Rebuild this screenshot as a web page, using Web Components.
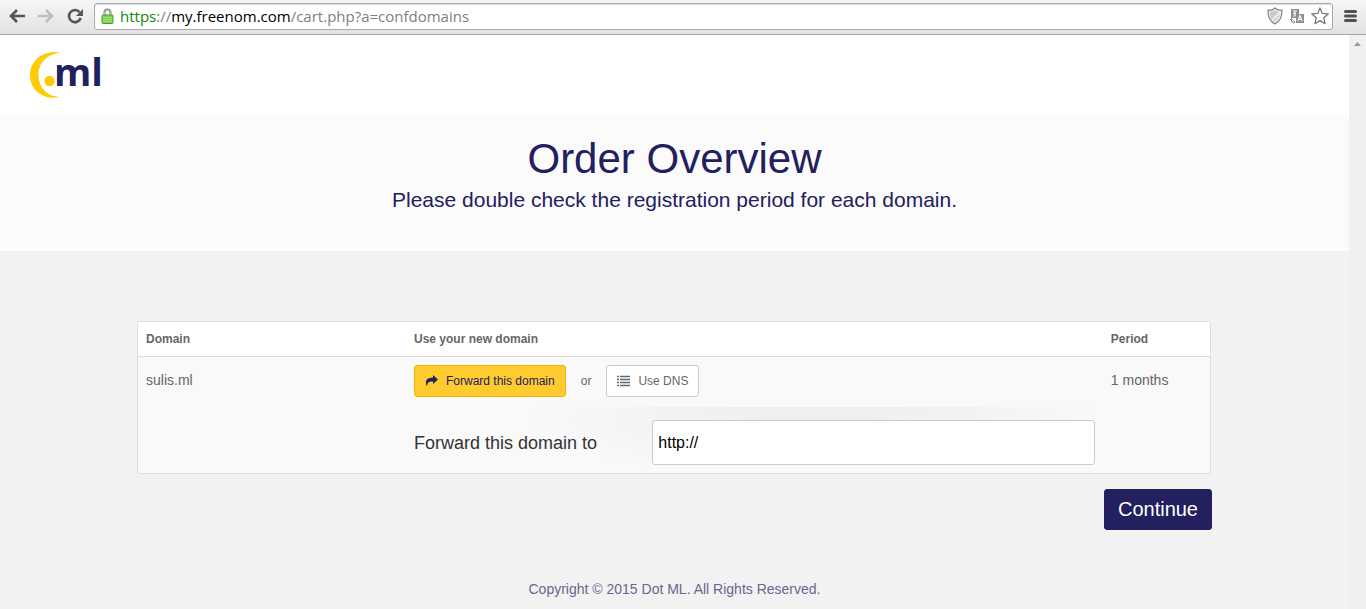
<!DOCTYPE html>
<html lang="en">
<head>
<meta charset="utf-8">
<meta name="viewport" content="width=device-width, initial-scale=1">
<title>Order Overview</title>
<style>
  html, body { margin: 0; }
  body { font-family: "Liberation Sans", Arial, sans-serif; background: #f2f2f2; --navy: #22205f; --line: #ddd; }
</style>
</head>
<body>
<order-app></order-app>

<script>
const define = (name, html, setup) => {
  const template = document.createElement('template');
  template.innerHTML = html;
  customElements.define(name, class extends HTMLElement {
    constructor() {
      super();
      this.attachShadow({ mode: 'open' }).append(template.content.cloneNode(true));
      if (setup) setup(this.shadowRoot);
    }
  });
};

define('browser-toolbar', `
  <style>
    :host { display: flex; align-items: center; gap: 11px; box-sizing: border-box; height: 35px; padding: 0 9px 2px; background: linear-gradient(#f6f6f6, #e2e2e2); border-bottom: 1px solid #a6a6a6; }
    nav { display: flex; gap: 13px; }
    button { display: block; padding: 0; border: 0; background: none; }
    svg { display: block; }
    .omnibox { flex: 1; display: flex; align-items: center; box-sizing: border-box; height: 27px; padding: 0 3px 0 6px; gap: 6px; background: #fff; border: 1px solid #ababab; border-radius: 3px; box-shadow: inset 0 1px 1px #ddd; min-width: 0; }
    .url { flex: 1; min-width: 0; overflow: hidden; white-space: nowrap; font: 15px/22px "Open Sans", "Noto Sans", sans-serif; color: #808080; outline: 0; }
    .secure { color: #0b8a0b; }
    .host { color: #000; }
    .actions { display: flex; align-items: center; gap: 6px; }
  </style>
  <nav aria-label="Browser">
    <button aria-label="Back"><svg width="16" height="16" viewBox="0 0 16 16" fill="none" stroke="#555" stroke-width="2.6"><path d="M2 8H16M8 2L2 8l6 6"/></svg></button>
    <button aria-label="Forward"><svg width="16" height="16" viewBox="0 0 16 16" fill="none" stroke="#bfbfbf" stroke-width="2.6"><path d="M14 8H0M8 2l6 6-6 6"/></svg></button>
    <button aria-label="Reload"><svg width="16" height="16" viewBox="0 0 16 16"><path d="M12.6 4.2A6 6 0 1 0 13.7 10" fill="none" stroke="#555" stroke-width="2.6"/><path d="M16 1v7H9z" fill="#555"/></svg></button>
  </nav>
  <div class="omnibox">
    <svg width="13" height="16" viewBox="0 0 13 16"><path d="M3.500 8V4.500a3 3 0 0 1 6 0V8" fill="none" stroke="#7b7b7b" stroke-width="2"/><path d="M3.500 8V4.500a3 3 0 0 1 6 0V8" fill="none" stroke="#ddd" stroke-width=".7"/><rect x="1" y="7" width="11" height="8.500" rx="1" fill="#83cf59" stroke="#4c9c31"/><path d="M2 9.500h9M2 11.500h9M2 13.500h9" stroke="#a5e080" stroke-width=".8"/></svg>
    <div class="url" role="textbox" aria-label="Address" contenteditable="true" spellcheck="false"><span class="secure">https</span>://<span class="host">my.freenom.com</span>/cart.php?a=confdomains</div>
    <div class="actions">
      <button aria-label="Shield"><svg width="16" height="18" viewBox="0 0 16 18"><path d="M8 1C6 3 3.500 3.500 1 3.200C.8 10 2.500 14 8 17c5.500-3 7.200-7 7-13.800C12.500 3.500 10 3 8 1z" fill="#eee" stroke="#858585" stroke-width="1.200"/><path d="M8 3C6.500 4.200 5 4.900 3 5c0 3.500.5 5.500 1.600 7.200L12 4.800C10.300 4.600 9.200 4 8 3z" fill="#c9c9c9"/><path d="M5.500 13.200L13 6c-.1 4-1.500 7-5 9.200z" fill="#d9d9d9"/></svg></button>
      <button aria-label="Translate"><svg width="16" height="16" viewBox="0 0 16 16"><path d="M2 1h8v5h5v9H7v-5H2z" fill="#8e8e8e"/><path d="M4 3h4M4 5.500h3M6 3v5M4 8h2.500" stroke="#fff" stroke-width="1" fill="none"/><path d="M8.800 13l2.200-5.500 2.200 5.500M9.700 11.500h2.600" stroke="#fff" stroke-width="1.200" fill="none"/><path d="M2.500 11v3H6M1 12l1.500-1.500L4 12M4.500 12.500L6 14l-1.500 1.500" fill="none" stroke="#8e8e8e"/></svg></button>
      <button aria-label="Bookmark"><svg width="18" height="18" viewBox="0 0 18 18"><path d="M9 1l2.300 5.400 5.900.5-4.500 3.900 1.400 5.900L9 13.600l-5.100 3.100 1.400-5.900L.8 6.900l5.900-.5z" fill="#fff" stroke="#777" stroke-width="1.300" stroke-linejoin="round"/></svg></button>
    </div>
  </div>
  <button aria-label="Menu"><svg width="13" height="14" viewBox="0 0 13 14"><path d="M1.500 2.500h10M1.500 7h10M1.500 11.500h10" stroke="#505050" stroke-width="3" stroke-linecap="round"/></svg></button>
`);

define('page-scrollbar', `
  <style>
    :host { display: block; width: 17px; flex: none; background: #f0f0f0; }
    svg { display: block; margin: 6px auto 0; }
  </style>
  <svg width="7" height="5" viewBox="0 0 7 5"><path d="M0 5L3.500 1 7 5z" fill="#9c9c9c"/></svg>
`);

define('site-header', `
  <style>
    :host { display: block; background: #fff; padding: 7px 28px 13px; }
    a, svg { display: block; width: 84px; }
    text { font: 700 38px "Open Sans", "Noto Sans", sans-serif; fill: #22205f; }
  </style>
  <a href="#" aria-label="Dot ML home"><svg width="84" height="60" viewBox="0 -8 84 60">
    <path d="M33 2.500C17 -.5 2 9 2 25.200S17 50.500 33 47C20 47 10.500 38 10.500 25S20 4 33 2.500z" fill="#ffcb05"/>
    <circle cx="21.500" cy="31" r="5.200" fill="#ffcb05"/>
    <text x="26" y="36">ml</text>
  </svg></a>
`);

define('page-title', `
  <style>
    :host { display: block; padding: 20px 16px 37px; background: #fbfbfb; color: var(--navy); text-align: center; }
    h1 { margin: 0; font-size: 42px; line-height: 48px; font-weight: 400; }
    p { margin: 3px 0 0; font-size: 21px; line-height: 28px; }
  </style>
  <h1><slot></slot></h1>
  <p><slot name="lead"></slot></p>
`);

define('ui-button', `
  <style>
    :host { display: inline-block; }
    button { display: flex; align-items: center; gap: 8px; box-sizing: border-box; height: 32px; padding: 0 10px; font: 12px/18px "Liberation Sans", Arial, sans-serif; color: #666; background: #fff; border: 1px solid #ccc; border-radius: 3px; white-space: nowrap; }
    :host([kind="accent"]) button { color: var(--navy); background: #ffcb2f; border-color: #edb310; }
    :host([kind="primary"]) button { height: 41px; padding: 0 13px 2px; font-size: 20px; color: #fff; background: var(--navy); border-color: var(--navy); }
  </style>
  <button type="button"><slot name="icon"></slot><span><slot></slot></span></button>
`);

define('forward-form', `
  <style>
    :host { display: grid; grid-template-columns: 35fr 65fr; align-items: center; margin-top: 10px; padding-top: 13px; background: radial-gradient(ellipse 42% 100% at 59% 20%, #efefef, #f0f0f0 35%, #f9f9f9); }
    label { font-size: 18px; line-height: 24px; color: #333; }
    input { box-sizing: border-box; width: 100%; height: 45px; padding: 0 5px; font: 16px "Liberation Sans", Arial, sans-serif; color: #000; background: #fff; border: 1px solid #ccc; border-radius: 3px; }
  </style>
  <label for="target">Forward this domain to</label>
  <input id="target" type="text" value="http://">
`);

define('domain-table', `
  <style>
    :host { display: block; margin-right: 1px; }
    table { width: 100%; table-layout: fixed; border-collapse: separate; border-spacing: 0; border: 1px solid var(--line); border-radius: 3px; background: #f9f9f9; color: #666; font-size: 14px; line-height: 20px; }
    th { box-sizing: border-box; padding: 8px; text-align: left; font-size: 12px; line-height: 18px; background: #fff; border-bottom: 1px solid var(--line); }
    td { padding: 8px; vertical-align: top; }
    .plain { padding-top: 13px; }
    .domain { width: 25%; }
    .period { width: 10%; }
    .choices { display: flex; align-items: center; gap: 15px; font-size: 12px; }
    svg { display: block; }
  </style>
  <table>
    <thead><tr><th class="domain">Domain</th><th>Use your new domain</th><th class="period">Period</th></tr></thead>
    <tbody><tr>
      <td class="plain">sulis.ml</td>
      <td>
        <div class="choices">
          <ui-button kind="accent"><svg slot="icon" width="13" height="12" viewBox="0 0 13 12"><path d="M8 0l5 4.500L8 9V6.500C4.500 6.300 2.300 7 2.100 11.200 .2 8.500-.4 2.700 8 2.600z" fill="#22205f"/></svg>Forward this domain</ui-button>
          <span>or</span>
          <ui-button><svg slot="icon" width="13" height="12" viewBox="0 0 13 12"><path d="M0 1.500h2M3 1.500h10M0 4.500h2M3 4.500h10M0 7.500h2M3 7.500h10M0 10.500h2M3 10.500h10" stroke="#666" stroke-width="1.500"/></svg>Use DNS</ui-button>
        </div>
        <forward-form></forward-form>
      </td>
      <td class="plain">1 months</td>
    </tr></tbody>
  </table>
`);

define('site-footer', `
  <style>
    :host { display: block; padding: 49px 16px 10px; text-align: center; font-size: 14px; line-height: 20px; color: #69678f; }
  </style>
  <slot></slot>
`);

define('order-app', `
  <style>
    :host { display: flex; flex-direction: column; min-height: 100vh; }
    .view { flex: 1; display: flex; }
    .page { flex: 1; min-width: 0; }
    main { max-width: 1075px; margin: 0 auto; padding-top: 70px; }
    .submit { display: flex; justify-content: flex-end; margin-top: 15px; }
  </style>
  <browser-toolbar></browser-toolbar>
  <div class="view">
    <div class="page">
      <site-header></site-header>
      <page-title>Order Overview<span slot="lead">Please double check the registration period for each domain.</span></page-title>
      <main>
        <domain-table></domain-table>
        <div class="submit"><ui-button kind="primary">Continue</ui-button></div>
      </main>
      <site-footer>Copyright © 2015 Dot ML. All Rights Reserved.</site-footer>
    </div>
    <page-scrollbar></page-scrollbar>
  </div>
`);
</script>
</body>
</html>
